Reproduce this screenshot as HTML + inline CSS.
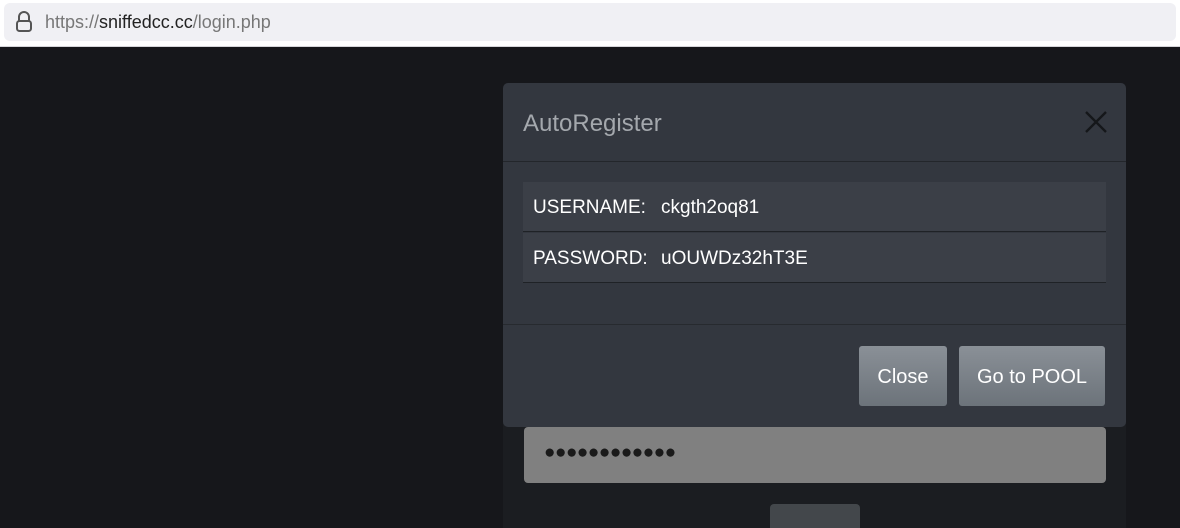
<!DOCTYPE html>
<html><head><meta charset="utf-8"><style>
*{box-sizing:border-box;margin:0;padding:0}
html,body{width:1180px;height:528px;overflow:hidden}
body{background:#16171b;font-family:"Liberation Sans",sans-serif;position:relative}
.bar{position:absolute;left:0;top:0;width:1180px;height:47px;background:#fff;border-bottom:1px solid #d6d6da}
.url{position:absolute;left:4px;top:3px;width:1172px;height:38px;background:#f0f0f4;border-radius:6px}
.url span{position:absolute;left:41px;top:9px;font-size:18px;color:#777}
.url b{font-weight:normal;color:#222}
.card{position:absolute;left:503px;top:300px;width:623px;height:228px;background:#1b1d21}
.inp{position:absolute;left:524px;top:427px;width:582px;height:56px;background:#808080;border-radius:4px}
.inp span{position:absolute;left:20px;top:15px;font-size:19px;letter-spacing:-0.5px;color:#1a1a1a}
.btn2{position:absolute;left:770px;top:504px;width:90px;height:24px;background:#43474b;border-radius:4px 4px 0 0}
.modal{position:absolute;left:503px;top:83px;width:623px;height:344px;background:#33373f;border-radius:5px}
.hd{height:79px;border-bottom:1px solid #23262b;position:relative}
.hd h1{position:absolute;left:20px;top:27px;font-size:24px;font-weight:normal;color:#a4a8ad}
.x{position:absolute;left:582px;top:28px}
.tbl{position:absolute;left:20px;top:99px;width:583px}
.row{height:50px;background:#3b3f47;border-bottom:1px solid #1f2226;margin-bottom:1px;position:relative;color:#fff;font-size:19px}
.row .k{position:absolute;left:10px;top:15px}
.row .v{position:absolute;left:138px;top:15px}
.ft{position:absolute;left:0;top:241px;width:623px;border-top:1px solid #272a2f}
.b{position:absolute;top:263px;height:60px;border-radius:3px;background:linear-gradient(#8a9097,#6c737a);color:#fff;font-size:20px;text-align:center;line-height:62px}
</style></head><body>
<div class="bar"><div class="url">
<svg style="position:absolute;left:10px;top:8px" width="20" height="22" viewBox="0 0 20 22"><path d="M5 10V6a5 5 0 0 1 10 0v4" fill="none" stroke="#555" stroke-width="2"/><rect x="3" y="10" width="14" height="10" rx="2.5" fill="none" stroke="#555" stroke-width="2"/></svg>
<span>https://<b>sniffedcc.cc</b>/login.php</span></div></div>
<div class="card"></div>
<div class="inp"><span>●●●●●●●●●●●●</span></div>
<div class="btn2"></div>
<div class="modal">
<div class="hd"><h1>AutoRegister</h1>
<svg class="x" width="22" height="22" viewBox="0 0 22 22"><path d="M1 1L21 21M21 1L1 21" stroke="#15171a" stroke-width="2.4"/></svg></div>
<div class="tbl">
<div class="row"><span class="k">USERNAME:</span><span class="v">ckgth2oq81</span></div>
<div class="row"><span class="k">PASSWORD:</span><span class="v">uOUWDz32hT3E</span></div>
</div>
<div class="ft"></div>
<div class="b" style="left:356px;width:88px">Close</div>
<div class="b" style="left:456px;width:146px">Go to POOL</div>
</div>
</body></html>
